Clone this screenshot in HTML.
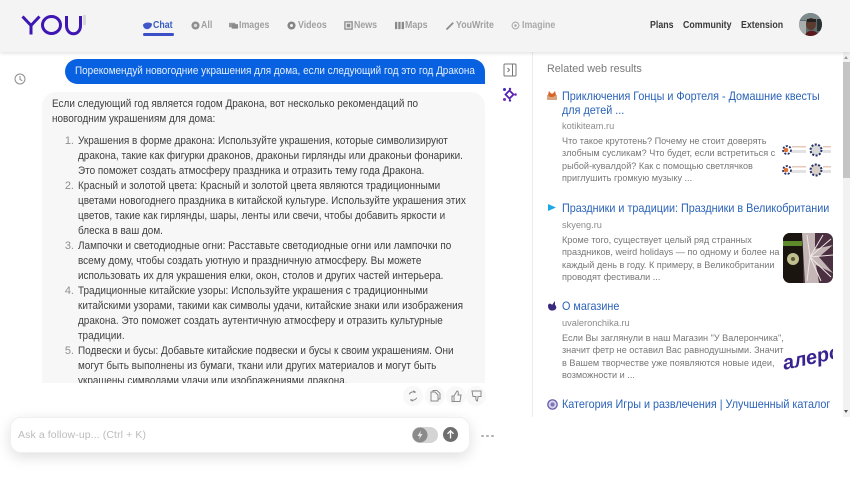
<!DOCTYPE html>
<html lang="ru"><head><meta charset="utf-8"><title>YOU Chat</title>
<style>
*{box-sizing:border-box}
html,body{margin:0;padding:0;width:850px;height:478px;overflow:hidden;background:#fff;font-family:"Liberation Sans",sans-serif}
#all{position:absolute;left:0;top:0;width:850px;height:478px;overflow:hidden;filter:blur(.3px)}
.a{position:absolute;white-space:nowrap}
#hdr{position:absolute;left:0;top:0;width:850px;height:52px;background:#f4f4f4;box-shadow:0 1px 4px rgba(0,0,0,.14);z-index:5}
.nav{position:absolute;top:18.500px;font-size:10.5px;line-height:12px;font-weight:bold;color:#a0a0a0;white-space:nowrap;transform:scaleX(.84);transform-origin:0 0}
.r{color:#3a3a3a}
.ic{position:absolute;top:21px;width:9px;height:9px}
.t{position:absolute;left:52px;font-size:11px;line-height:15px;color:#404040;white-space:nowrap;transform:scaleX(.905);transform-origin:0 0}
.n{position:absolute;font-size:11px;line-height:15px;color:#8f8f8f;width:22px;text-align:right;left:52px}
.ti{position:absolute;left:562px;font-size:12px;line-height:15px;color:#2a62b8;white-space:nowrap;transform:scaleX(.9);transform-origin:0 0}
.ho{position:absolute;left:562px;font-size:9.6px;line-height:12px;color:#8b8b8b;white-space:nowrap;transform:scaleX(.96);transform-origin:0 0}
.d{position:absolute;left:562px;font-size:9.6px;line-height:12.5px;color:#777;white-space:nowrap;transform:scaleX(.95);transform-origin:0 0}
</style></head><body><div id="all">

<div id="hdr">
<svg class="a" style="left:20px;top:13px" width="68" height="24" viewBox="0 0 68 24" fill="none" stroke="#3d16b4" stroke-width="3">
<path d="M2.500 3.500 L11 12.500 L19.500 3.500 M11 12.500 V21.500"/>
<ellipse cx="31.500" cy="12" rx="9" ry="8.500"/>
<path d="M46.500 3 V12.500 C46.500 23.500 60.500 23.500 60.500 12.500 V3"/>
<rect x="63" y="2" width="3" height="10" fill="#d8d8d8" stroke="none"/>
</svg>

<svg class="ic" style="left:143px" viewBox="0 0 10 10"><path d="M0 4 C2 1 8 1 10 3 C10 7 7 9 4 9 C2 9 0 7 0 4Z" fill="#3f57c9"/></svg>
<div class="nav" style="left:153px;color:#3a5fc4">Chat</div>
<div class="a" style="left:143px;top:33px;width:31px;height:3px;border-radius:2px;background:#3d4fc6"></div>
<svg class="ic" style="left:191px" viewBox="0 0 10 10"><circle cx="5" cy="5" r="4.500" fill="#8f8f8f"/><circle cx="5" cy="5" r="1.800" fill="#ddd"/></svg>
<div class="nav" style="left:201px">All</div>
<svg class="ic" style="left:229px" viewBox="0 0 10 10"><rect x="0" y="2" width="7" height="5" fill="#9a9a9a"/><rect x="3" y="3.500" width="7" height="5" fill="#8a8a8a"/></svg>
<div class="nav" style="left:239px">Images</div>
<svg class="ic" style="left:287px" viewBox="0 0 10 10"><circle cx="5" cy="5" r="4.500" fill="#858585"/><circle cx="5" cy="5" r="1.700" fill="#eee"/></svg>
<div class="nav" style="left:298px">Videos</div>
<svg class="ic" style="left:344px" viewBox="0 0 10 10"><rect x="1" y="1" width="8" height="8" fill="none" stroke="#8d8d8d" stroke-width="1.500"/><rect x="3" y="3" width="4" height="4" fill="#8d8d8d"/></svg>
<div class="nav" style="left:354px">News</div>
<svg class="ic" style="left:395px" viewBox="0 0 10 10"><path d="M0 1H2.500V9H0ZM3.700 1H6.200V9H3.700ZM7.400 1H10V9H7.400Z" fill="#8a8a8a"/></svg>
<div class="nav" style="left:405px">Maps</div>
<svg class="ic" style="left:446px" viewBox="0 0 10 10"><path d="M0.500 9.500 L8 2" stroke="#8c8c8c" stroke-width="2"/></svg>
<div class="nav" style="left:456px">YouWrite</div>
<svg class="ic" style="left:511px" viewBox="0 0 10 10"><circle cx="5" cy="5" r="3.800" fill="none" stroke="#ababab" stroke-width="1.200"/><circle cx="5" cy="5" r="1.400" fill="#ababab"/></svg>
<div class="nav" style="left:522px;color:#aaa">Imagine</div>

<div class="nav r" style="left:650px">Plans</div>
<div class="nav r" style="left:683px">Community</div>
<div class="nav r" style="left:741px">Extension</div>
<svg class="a" style="left:799px;top:13px" width="23" height="23" viewBox="0 0 23 23"><defs><clipPath id="av"><circle cx="11.500" cy="11.500" r="11.500"/></clipPath></defs><g clip-path="url(#av)"><rect width="23" height="23" fill="#5e6a6c"/><rect x="0" y="0" width="23" height="7" fill="#7d8b8c"/><rect x="0" y="8" width="7" height="15" fill="#a8aeae"/><ellipse cx="12" cy="11" rx="5" ry="6" fill="#5b3b30"/><rect x="8" y="6" width="9" height="3" fill="#222"/><path d="M6 23 C7 16 18 16 20 23Z" fill="#5a1a1e"/><rect x="18" y="6" width="5" height="12" fill="#2b3030"/></g></svg>
</div>

<!-- left rail -->
<svg class="a" style="left:14px;top:73px" width="12" height="12" viewBox="0 0 12 12" fill="none" stroke="#8d8d8d" stroke-width="1"><circle cx="6" cy="6" r="5"/><path d="M6 3 V6.300 L8.300 7.800"/></svg>

<!-- user bubble -->
<div class="a" style="left:65px;top:59px;width:420px;height:25px;background:#0861e0;border-radius:13px 13px 0 13px"></div>
<div class="a" style="left:75px;top:64px;font-size:11px;line-height:15px;color:#e6f0ff;transform:scaleX(.903);transform-origin:0 0">Порекомендуй новогодние украшения для дома, если следующий год это год Дракона</div>

<!-- answer -->
<div class="a" style="left:42px;top:92px;width:443px;height:291px;background:#f7f7f8;border-radius:14px 14px 0 0;overflow:hidden">
<div style="position:absolute;left:-42px;top:-92px;width:530px;height:500px">
<div class="t" style="top:97px">Если следующий год является годом Дракона, вот несколько рекомендаций по</div>
<div class="t" style="top:112px">новогодним украшениям для дома:</div>
<div class="n" style="top:134px">1.</div>
<div class="t" style="left:78px;top:134px">Украшения в форме дракона: Используйте украшения, которые символизируют</div>
<div class="t" style="left:78px;top:149px">дракона, такие как фигурки драконов, драконьи гирлянды или драконьи фонарики.</div>
<div class="t" style="left:78px;top:164px">Это поможет создать атмосферу праздника и отразить тему года Дракона.</div>
<div class="n" style="top:179px">2.</div>
<div class="t" style="left:78px;top:179px">Красный и золотой цвета: Красный и золотой цвета являются традиционными</div>
<div class="t" style="left:78px;top:194px">цветами новогоднего праздника в китайской культуре. Используйте украшения этих</div>
<div class="t" style="left:78px;top:209px">цветов, такие как гирлянды, шары, ленты или свечи, чтобы добавить яркости и</div>
<div class="t" style="left:78px;top:224px">блеска в ваш дом.</div>
<div class="n" style="top:239px">3.</div>
<div class="t" style="left:78px;top:239px">Лампочки и светодиодные огни: Расставьте светодиодные огни или лампочки по</div>
<div class="t" style="left:78px;top:254px">всему дому, чтобы создать уютную и праздничную атмосферу. Вы можете</div>
<div class="t" style="left:78px;top:269px">использовать их для украшения елки, окон, столов и других частей интерьера.</div>
<div class="n" style="top:284px">4.</div>
<div class="t" style="left:78px;top:284px">Традиционные китайские узоры: Используйте украшения с традиционными</div>
<div class="t" style="left:78px;top:299px">китайскими узорами, такими как символы удачи, китайские знаки или изображения</div>
<div class="t" style="left:78px;top:314px">дракона. Это поможет создать аутентичную атмосферу и отразить культурные</div>
<div class="t" style="left:78px;top:329px">традиции.</div>
<div class="n" style="top:344px">5.</div>
<div class="t" style="left:78px;top:344px">Подвески и бусы: Добавьте китайские подвески и бусы к своим украшениям. Они</div>
<div class="t" style="left:78px;top:359px">могут быть выполнены из бумаги, ткани или других материалов и могут быть</div>
<div class="t" style="left:78px;top:374px">украшены символами удачи или изображениями дракона.</div>
</div></div>

<!-- side icons -->
<svg class="a" style="left:503px;top:63px" width="14" height="14" viewBox="0 0 14 14" fill="none" stroke="#777" stroke-width="1"><rect x="1" y="1" width="12" height="12" rx="1"/><path d="M9.500 1V13M4.500 5L6.500 7L4.500 9"/></svg>
<svg class="a" style="left:502px;top:87px" width="15" height="15" viewBox="0 0 15 15"><path d="M7.500 3.500 L11.500 7.500 L7.500 11.500 L3.500 7.500Z" fill="none" stroke="#5a22b5" stroke-width="1.800"/><circle cx="2.500" cy="2.500" r="1.500" fill="#3d2bb8"/><circle cx="2.500" cy="12.500" r="1.500" fill="#7a2ab5"/><circle cx="8" cy="2" r="1.200" fill="#4b2ab5"/><circle cx="13.500" cy="7.500" r="1.300" fill="#7a2ab5"/><circle cx="8" cy="13.500" r="1.200" fill="#4b2ab5"/></svg>

<!-- action icons -->
<div class="a" style="left:403px;top:386px;width:20px;height:20px;border-radius:50%;background:#f8f8f8"></div>
<div class="a" style="left:425px;top:386px;width:20px;height:20px;border-radius:50%;background:#f8f8f8"></div>
<div class="a" style="left:446px;top:386px;width:20px;height:20px;border-radius:50%;background:#f8f8f8"></div>
<div class="a" style="left:466px;top:386px;width:20px;height:20px;border-radius:50%;background:#f8f8f8"></div>
<svg class="a" style="left:403px;top:386px" width="84" height="20" viewBox="0 0 84 20" fill="none" stroke="#8a8a8a" stroke-width="1">
<path d="M6.300 8.300 A4 4 0 0 1 12.500 6.800 M13.700 11.700 A4 4 0 0 1 7.500 13.200 M10 4.800 L12.500 6 M10 15.200 L7.500 14"/>
<path d="M28 6 H32 L35 9 V15 H28Z M30 6 V4.500 H34 L37 7.500 V13 H35"/>
<path d="M49 10 H51 V15.500 H49Z M51 10 L54 5 C55.500 5 55.500 7 55 9 H58 L57 15.500 H51"/>
<path d="M69 5 H78 V10.500 H75 L74.500 15 C73 15 72.500 13 73 10.500 H70 Z"/>
</svg>

<!-- input -->
<div class="a" style="left:10px;top:417px;width:460px;height:36px;background:#fff;border-radius:11px;border:1px solid #f0f0f0;box-shadow:0 4px 14px rgba(0,0,0,.13)"></div>
<div class="a" style="left:18px;top:428px;font-size:10.5px;line-height:14px;color:#bcbcbc;letter-spacing:.1px">Ask a follow-up... (Ctrl + K)</div>
<div class="a" style="left:412px;top:427px;width:26px;height:16px;border-radius:8px;background:#d4d4d4"></div>
<svg class="a" style="left:412px;top:427px" width="16" height="16" viewBox="0 0 16 16"><circle cx="8" cy="8" r="7.500" fill="#8a8a8a"/><path d="M9 3.500 L5.500 9 H7.800 L7 12.500 L10.500 7 H8.200Z" fill="#e8e8e8"/></svg>
<svg class="a" style="left:443px;top:427px" width="15" height="15" viewBox="0 0 15 15"><circle cx="7.500" cy="7.500" r="7.500" fill="#6e6e6e"/><path d="M7.500 11.500 V4 M4.500 6.800 L7.500 3.800 L10.500 6.800" fill="none" stroke="#fff" stroke-width="1.300"/></svg>
<div class="a" style="left:481px;top:435px;width:2.500px;height:2px;background:#b0b0b0;border-radius:1px"></div>
<div class="a" style="left:486px;top:435px;width:2.500px;height:2px;background:#b0b0b0;border-radius:1px"></div>
<div class="a" style="left:491px;top:435px;width:2.500px;height:2px;background:#b0b0b0;border-radius:1px"></div>

<!-- right panel -->
<div class="a" style="left:532px;top:52px;width:1px;height:365px;background:#ececec"></div>
<div class="a" style="left:547px;top:62px;font-size:10.8px;line-height:14px;color:#787878">Related web results</div>

<svg class="a" style="left:547px;top:90px" width="10" height="11" viewBox="0 0 10 11"><path d="M0 5 H10 V10 H0Z" fill="#d9a57e"/><path d="M1 5 L2 1 L4 3.500 H6 L8 1 L9 5 L6 7 H3Z" fill="#d8642a"/></svg>
<div class="ti" style="top:89px">Приключения Гонцы и Фортеля - Домашние квесты</div>
<div class="ti" style="top:103px">для детей ...</div>
<div class="ho" style="top:121px">kotikiteam.ru</div>
<div class="d" style="top:135.500px">Что такое крутотень? Почему не стоит доверять</div>
<div class="d" style="top:148px">злобным сусликам? Что будет, если встретиться с</div>
<div class="d" style="top:160.500px">рыбой-кувалдой? Как с помощью светлячков</div>
<div class="d" style="top:173px">приглушить громкую музыку ...</div>
<svg class="a" style="left:782px;top:135px" width="50" height="50" viewBox="0 0 50 50">
<rect width="50" height="50" fill="#fff"/>
<g><circle cx="5" cy="15" r="4" fill="none" stroke="#23326b" stroke-width="1.800" stroke-dasharray="2 1.500"/><circle cx="4" cy="15" r="2.300" fill="#d9753a"/><rect x="10" y="11" width="14" height="1.500" fill="#e9c7b6"/><rect x="10" y="15" width="14" height="3" fill="#e2e2e2"/></g>
<g><circle cx="34" cy="15" r="5.500" fill="#d8d8d8" stroke="#23326b" stroke-width="2" stroke-dasharray="2 1.500"/><rect x="41" y="11" width="8" height="1.500" fill="#e9c7b6"/><rect x="41" y="15" width="8" height="3" fill="#e2e2e2"/></g>
<g transform="translate(0 20)"><circle cx="5" cy="15" r="4" fill="none" stroke="#23326b" stroke-width="1.800" stroke-dasharray="2 1.500"/><circle cx="4" cy="15" r="2.300" fill="#d9753a"/><rect x="10" y="11" width="14" height="1.500" fill="#e9c7b6"/><rect x="10" y="15" width="14" height="3" fill="#e2e2e2"/></g>
<g transform="translate(0 20)"><circle cx="34" cy="15" r="5.500" fill="#d8cfc6" stroke="#23326b" stroke-width="2" stroke-dasharray="2 1.500"/><rect x="41" y="11" width="8" height="1.500" fill="#e9c7b6"/><rect x="41" y="15" width="8" height="3" fill="#e2e2e2"/></g>
</svg>

<svg class="a" style="left:548px;top:204px" width="8" height="7" viewBox="0 0 8 7"><path d="M0 0 L8 3.500 L0 7Z" fill="#1ea7e8"/></svg>
<div class="ti" style="top:200.500px">Праздники и традиции: Праздники в Великобритании</div>
<div class="ho" style="top:219.500px">skyeng.ru</div>
<div class="d" style="top:234.500px">Кроме того, существует целый ряд странных</div>
<div class="d" style="top:247px">праздников, weird holidays — по одному и более на</div>
<div class="d" style="top:259.500px">каждый день в году. К примеру, в Великобритании</div>
<div class="d" style="top:272px">проводят фестивали ...</div>
<svg class="a" style="left:783px;top:233px" width="50" height="50" viewBox="0 0 50 50">
<defs><clipPath id="fw"><rect width="50" height="50" rx="7"/></clipPath></defs>
<g clip-path="url(#fw)"><rect width="50" height="50" fill="#4a3040"/><rect width="20" height="50" fill="#1b1510"/><rect x="0" y="8" width="19" height="5" fill="#5f8a2a"/><circle cx="10" cy="26" r="6" fill="#c0bf90"/><circle cx="10" cy="26" r="2" fill="#5c5a38"/>
<path d="M19 0 L22 50 H36 L33 32 L50 40 L36 24 L50 12 L32 16 L32 0Z" fill="#c4b6b6"/>
<g stroke="#efe6e6" stroke-width="1"><path d="M27 24 L48 6M27 24 L50 22M27 24 L48 44M27 24 L24 48M27 24 L24 2M27 24 L38 48M27 24 L40 2"/></g></g></svg>

<svg class="a" style="left:547px;top:300px" width="11" height="11" viewBox="0 0 11 11"><path d="M1 6 C1 3 4 3 5 5 L8 1 L8 5 C10 6 10 10 6 10.500 C3 11 1 9 1 6Z" fill="#3a2a80"/></svg>
<div class="ti" style="top:299px">О магазине</div>
<div class="ho" style="top:318px">uvaleronchika.ru</div>
<div class="d" style="top:332.500px">Если Вы заглянули в наш Магазин "У Валерончика",</div>
<div class="d" style="top:345px">значит фетр не оставил Вас равнодушными. Значит</div>
<div class="d" style="top:357.500px">в Вашем творчестве уже появляются новые идеи,</div>
<div class="d" style="top:370px">возможности и ...</div>
<div class="a" style="left:782px;top:344px;width:51px;height:30px;overflow:hidden"><div style="position:absolute;left:1px;top:9px;font:italic bold 20px/22px 'Liberation Sans',sans-serif;color:#3a2390;transform:rotate(-12deg);transform-origin:0 50%;white-space:nowrap">алеро</div></div>

<svg class="a" style="left:547px;top:399px" width="11" height="11" viewBox="0 0 11 11"><circle cx="5.500" cy="5.500" r="4.700" fill="#d5d1ea" stroke="#5c55a8" stroke-width="1.200"/><circle cx="5.500" cy="5.500" r="2" fill="#7a74b8"/></svg>
<div class="ti" style="top:397px">Категория Игры и развлечения | Улучшенный каталог</div>

<!-- scrollbar -->
<div class="a" style="left:843px;top:52px;width:7px;height:365px;background:#f2f2f2"></div>
<div class="a" style="left:843px;top:62px;width:7px;height:116px;background:#c4c4c4"></div>
<div class="a" style="left:844px;top:56px;border-left:2.500px solid transparent;border-right:2.500px solid transparent;border-bottom:3px solid #999"></div>
<div class="a" style="left:844px;top:410px;border-left:2.500px solid transparent;border-right:2.500px solid transparent;border-top:3px solid #555"></div>
</div></body></html>
